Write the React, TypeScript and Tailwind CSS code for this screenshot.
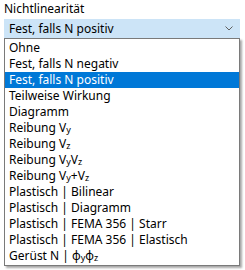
import React from "react";

const Sub = ({ children }: { children: React.ReactNode }) => (
  <span className="text-[9px] align-[-1px] leading-none">{children}</span>
);

export default function App() {
  const items: React.ReactNode[] = [
    "Ohne",
    "Fest, falls N negativ",
    "Fest, falls N positiv",
    "Teilweise Wirkung",
    "Diagramm",
    <>Reibung V<Sub>y</Sub></>,
    <>Reibung V<Sub>z</Sub></>,
    <>Reibung V<Sub>y</Sub>V<Sub>z</Sub></>,
    <>Reibung V<Sub>y</Sub>+V<Sub>z</Sub></>,
    "Plastisch | Bilinear",
    "Plastisch | Diagramm",
    "Plastisch | FEMA 356 | Starr",
    "Plastisch | FEMA 356 | Elastisch",
    <>Gerüst N | φ<Sub>y</Sub>φ<Sub>z</Sub></>,
  ];
  return (
    <div className="w-[245px] h-[270px] bg-white text-[12px] text-black" style={{ fontFamily: '"Noto Sans", sans-serif' }}>
      <div className="px-[4px] pt-[1px] h-[19px] leading-[16px]">Nichtlinearität</div>
      <div className="mx-[4px] w-[236px] h-[19px] bg-[#cce4f7] flex items-center justify-between pl-[5px] pr-[7px]">
        <span className="leading-[16px]">Fest, falls N positiv</span>
        <svg width="8" height="5" viewBox="0 0 8 5">
          <path d="M0.5 0.5 L4 4 L7.5 0.5" fill="none" stroke="#606060" strokeWidth="1" />
        </svg>
      </div>
      <div className="ml-[4px] w-[236px] border border-[#7a7a7a] bg-white py-[1px] shadow-[2px_2px_2px_rgba(0,0,0,0.35)]">
        {items.map((it, i) => (
          <div
            key={i}
            className={`h-[16px] leading-[16px] pl-[4px] whitespace-nowrap ${i === 2 ? "bg-[#0078d7] text-white" : ""}`}
          >
            {it}
          </div>
        ))}
      </div>
    </div>
  );
}
